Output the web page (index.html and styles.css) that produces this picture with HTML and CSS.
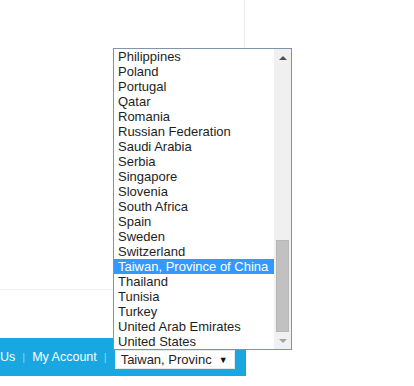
FILE: index.html
```html
<html>
<head>
<title>Country selector</title>
<link rel="stylesheet" href="styles.css">
</head>
<body>

<div class="page">
  <div class="content"></div>

  <div class="footer-bar">
    <span class="nav-link">Us</span>
    <span class="sep">|</span>
    <span class="nav-link">My Account</span>
    <span class="sep">|</span>
    <div class="country-select">
      <span class="country-value">Taiwan, Provinc</span>
      <span class="caret">&#9660;</span>
    </div>
  </div>

  <div class="listbox">
    <div class="options">
      <div class="option">Philippines</div>
      <div class="option">Poland</div>
      <div class="option">Portugal</div>
      <div class="option">Qatar</div>
      <div class="option">Romania</div>
      <div class="option">Russian Federation</div>
      <div class="option">Saudi Arabia</div>
      <div class="option">Serbia</div>
      <div class="option">Singapore</div>
      <div class="option">Slovenia</div>
      <div class="option">South Africa</div>
      <div class="option">Spain</div>
      <div class="option">Sweden</div>
      <div class="option">Switzerland</div>
      <div class="option selected">Taiwan, Province of China</div>
      <div class="option">Thailand</div>
      <div class="option">Tunisia</div>
      <div class="option">Turkey</div>
      <div class="option">United Arab Emirates</div>
      <div class="option">United States</div>
    </div>
    <div class="scrollbar">
      <div class="arrow arrow-up"></div>
      <div class="track">
        <div class="thumb"></div>
      </div>
      <div class="arrow arrow-down"></div>
    </div>
  </div>
</div>

</body>
</html>
```

FILE: styles.css
```css
body {
  margin: 0;
  background: #fff;
  font-family: "Liberation Sans", Arial, Helvetica, sans-serif;
}

.page {
  position: relative;
  width: 414px;
  height: 386px;
  overflow: hidden;
}

.content {
  width: 244px;
  height: 289px;
  border-right: 1px solid #ececec;
  border-bottom: 1px solid #efefef;
}

.footer-bar {
  display: flex;
  align-items: center;
  margin-top: 48px;
  width: 246px;
  height: 38px;
  background-color: #19a7e1;
  color: #fff;
  font-size: 12.5px;
}

.nav-link {
  color: #fff;
}

.sep {
  color: #8fd3f1;
  margin: 0 7px;
  font-size: 11px;
}

.country-select {
  display: flex;
  align-items: center;
  justify-content: space-between;
  align-self: flex-start;
  box-sizing: border-box;
  width: 120px;
  height: 19px;
  margin-top: 12px;
  margin-left: 1px;
  padding: 0 6px 0 5px;
  background: #fff;
  border: 1px solid #e8e8e8;
  color: #222;
  font-size: 13px;
}

.caret {
  font-size: 9px;
  color: #111;
}

.listbox {
  position: absolute;
  left: 113px;
  top: 48px;
  display: flex;
  width: 177px;
  height: 300px;
  border: 1px solid #7f93ad;
  background: #fff;
}

.options {
  flex: 1;
}

.option {
  height: 15px;
  line-height: 15px;
  padding-left: 4px;
  font-size: 13px;
  color: #1e1e1e;
  white-space: nowrap;
  overflow: hidden;
}

.option.selected {
  background-color: #3399ff;
  color: #fff;
}

.scrollbar {
  display: flex;
  flex-direction: column;
  width: 17px;
  background-color: #f0f0f0;
}

.arrow {
  height: 17px;
  display: flex;
  align-items: center;
  justify-content: center;
}

.arrow-up::after {
  content: "";
  border-left: 4px solid transparent;
  border-right: 4px solid transparent;
  border-bottom: 4px solid #505050;
}

.arrow-down::after {
  content: "";
  border-left: 4px solid transparent;
  border-right: 4px solid transparent;
  border-top: 4px solid #a3a3a3;
}

.track {
  flex: 1;
  display: flex;
  flex-direction: column;
  justify-content: flex-end;
  padding: 0 2px;
}

.thumb {
  height: 92px;
  background-color: #c1c1c1;
  border: 1px solid #b7b7b7;
  box-sizing: border-box;
}
```
